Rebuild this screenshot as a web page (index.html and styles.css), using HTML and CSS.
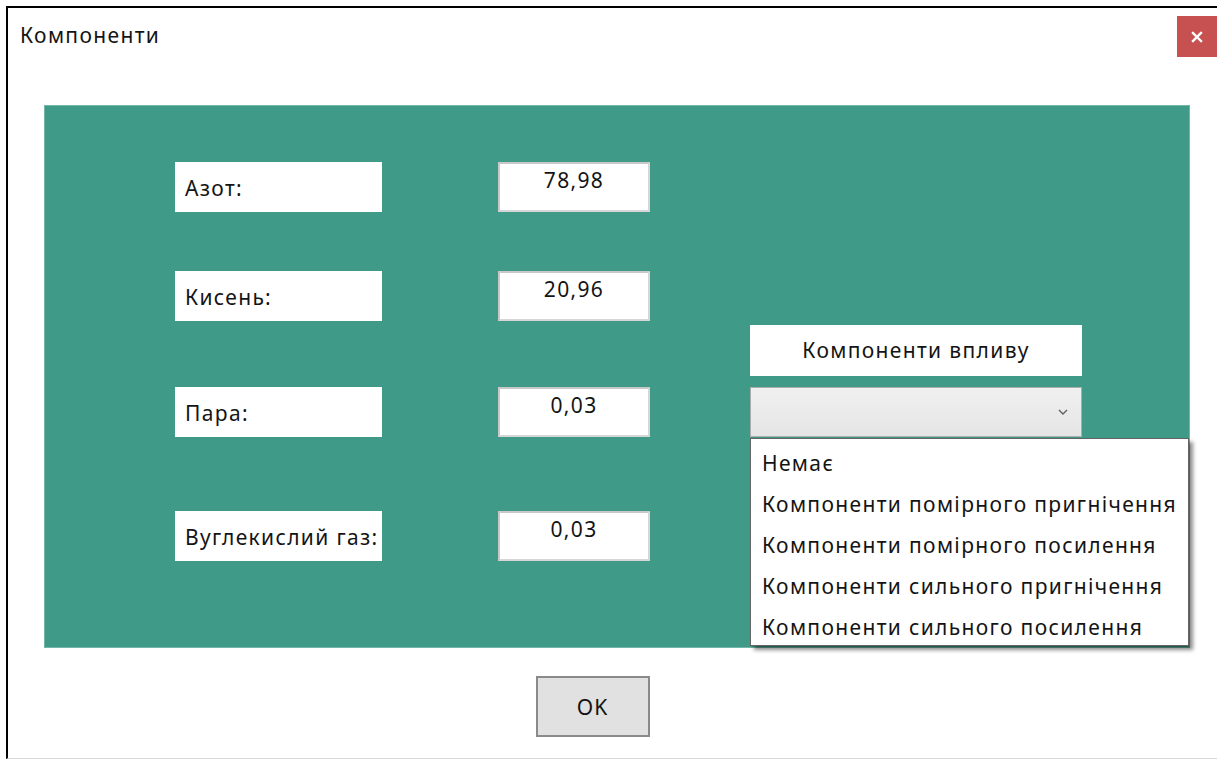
FILE: index.html
```html
<!DOCTYPE html>
<html lang="uk">
<head>
<meta charset="utf-8">
<title>Компоненти</title>
<link rel="stylesheet" href="styles.css">
</head>
<body>
<div class="window">
  <header class="titlebar">
    <span class="title">Компоненти</span>
    <button class="close" type="button" aria-label="Закрити">
      <svg width="12" height="12" viewBox="0 0 12 12"><path d="M2 2 L10 10 M10 2 L2 10" stroke="#fff" stroke-width="2.4" stroke-linecap="square"/></svg>
    </button>
  </header>

  <section class="panel">
    <div class="fields">
      <div class="row">
        <div class="label">Азот:</div>
        <div class="value">78,98</div>
      </div>
      <div class="row row-2">
        <div class="label">Кисень:</div>
        <div class="value">20,96</div>
      </div>
      <div class="row row-3">
        <div class="label">Пара:</div>
        <div class="value">0,03</div>
      </div>
      <div class="row row-4">
        <div class="label">Вуглекислий газ:</div>
        <div class="value">0,03</div>
      </div>
    </div>

    <div class="influence">
      <div class="heading">Компоненти впливу</div>
      <div class="combo">
        <svg class="chevron" width="10" height="6" viewBox="0 0 10 6"><path d="M1 1 L5 5 L9 1" fill="none" stroke="#606060" stroke-width="1.4"/></svg>
        <ul class="dropdown">
          <li>Немає</li>
          <li>Компоненти помірного пригнічення</li>
          <li>Компоненти помірного посилення</li>
          <li>Компоненти сильного пригнічення</li>
          <li>Компоненти сильного посилення</li>
        </ul>
      </div>
    </div>
  </section>

  <footer class="actions">
    <button class="ok" type="button">OK</button>
  </footer>
</div>
</body>
</html>
```

FILE: styles.css
```css
* {
  box-sizing: border-box;
}

html, body {
  margin: 0;
  padding: 0;
  background: #ffffff;
  overflow: hidden;
}

body {
  width: 1217px;
  height: 760px;
  font-family: "Noto Sans", "Open Sans", sans-serif;
  font-size: 21px;
  letter-spacing: 1.35px;
  color: #141414;
}

.window {
  margin: 6px 0 0 6px;
  height: 753px;
  border-left: 2px solid #000;
  border-top: 2px solid #000;
  border-bottom: 1px solid #d9d9d9;
  background: #fff;
  display: flex;
  flex-direction: column;
}

.titlebar {
  height: 97px;
  display: flex;
  align-items: flex-start;
  justify-content: space-between;
  padding: 8px 0 0 12px;
}

.title {
  line-height: 38px;
}

.close {
  width: 40px;
  height: 41px;
  border: none;
  background: #c75050;
  display: flex;
  align-items: center;
  justify-content: center;
  padding: 0;
}

.panel {
  margin-left: 36px;
  width: 1146px;
  height: 543px;
  background: #409a88;
  border: 1px solid #72b7a8;
  display: flex;
  padding: 56px 0 0 130px;
}

.fields {
  display: flex;
  flex-direction: column;
}

.row {
  display: grid;
  grid-template-columns: 207px 152px;
  column-gap: 116px;
  height: 50px;
}

.row-2 { margin-top: 59px; }
.row-3 { margin-top: 66px; }
.row-4 { margin-top: 74px; }

.label {
  background: #fff;
  padding: 12px 0 0 10px;
  line-height: 28px;
  white-space: nowrap;
}

.value {
  background: #fff;
  border: 2px solid #c8c8c8;
  border-right-color: #d6d6d6;
  border-bottom-color: #d6d6d6;
  text-align: center;
  line-height: 28px;
  padding-top: 2px;
}

.influence {
  margin-left: 100px;
  padding-top: 163px;
  width: 332px;
  display: flex;
  flex-direction: column;
  gap: 11px;
}

.heading {
  height: 51px;
  background: #fff;
  text-align: center;
  line-height: 51px;
}

.combo {
  position: relative;
  height: 50px;
  border: 1px solid #acacac;
  background: linear-gradient(#f0f0f0, #e5e5e5);
}

.chevron {
  position: absolute;
  right: 13px;
  top: 21px;
}

.dropdown {
  position: absolute;
  left: -1px;
  top: 50px;
  width: 439px;
  margin: 0;
  padding: 4px 0 0 0;
  list-style: none;
  background: #fff;
  border: 1px solid #646464;
  box-shadow: 4px 4px 4px rgba(0, 0, 0, 0.45);
  height: 208px;
  z-index: 2;
}

.dropdown li {
  height: 41px;
  line-height: 41px;
  padding-left: 11px;
  white-space: nowrap;
}

.actions {
  display: flex;
  justify-content: center;
  padding: 28px 0 0 0;
  margin-left: -40px;
}

.ok {
  width: 114px;
  height: 61px;
  background: #e1e1e1;
  border: 2px solid #8a8a8a;
  font-family: inherit;
  font-size: 21px;
  letter-spacing: 1px;
  color: #141414;
  padding: 0;
}
```
